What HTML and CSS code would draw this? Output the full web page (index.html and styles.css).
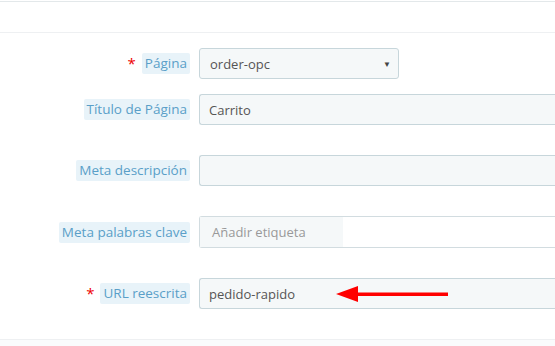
FILE: index.html
```html
<!DOCTYPE html>
<html lang="es">
<head>
    <meta charset="UTF-8">
    <title>Meta</title>
    <link rel="stylesheet" href="styles.css">
</head>
<body>
    <div class="panel-top"></div>
    <div class="panel-head"></div>

    <form class="form">
        <div class="fila">
            <label class="etiqueta"><span class="req">*</span><span class="caja">Página</span></label>
            <div class="campo">
                <div class="select">order-opc<span class="flecha">▼</span></div>
            </div>
        </div>

        <div class="fila">
            <label class="etiqueta"><span class="caja">Título de Página</span></label>
            <div class="campo">
                <input class="input" type="text" value="Carrito">
            </div>
        </div>

        <div class="fila espacio">
            <label class="etiqueta"><span class="caja">Meta descripción</span></label>
            <div class="campo">
                <input class="input" type="text" value="">
            </div>
        </div>

        <div class="fila espacio">
            <label class="etiqueta"><span class="caja">Meta palabras clave</span></label>
            <div class="campo">
                <div class="tags">
                    <span class="tag-hint">Añadir etiqueta</span>
                    <span class="tag-blank"></span>
                </div>
            </div>
        </div>

        <div class="fila espacio">
            <label class="etiqueta"><span class="req">*</span><span class="caja">URL reescrita</span></label>
            <div class="campo">
                <input class="input" type="text" value="pedido-rapido">
                <!-- flecha roja de la captura -->
                <svg class="senal" width="114" height="18" viewBox="0 0 114 18">
                    <polygon points="0,9 22,1 22,17" fill="#f00"/>
                    <rect x="20" y="7.5" width="92" height="3.5" fill="#f00"/>
                </svg>
            </div>
        </div>
    </form>

    <div class="panel-foot"></div>
</body>
</html>
```

FILE: styles.css
```css
body {
    margin: 0;
    background-color: #fff;
    font-family: "Open Sans", "Noto Sans", sans-serif;
    font-size: 13px;
    color: #555;
}

.panel-top {
    height: 1px;
    border-bottom: 1px solid #e3e8ea;
}
.panel-head {
    height: 30px;
    border-bottom: 1px solid #eef0f2;
}

.form {
    padding-top: 15px;
}
.fila {
    display: flex;
    align-items: center;
    margin-bottom: 15px;
}
.fila.espacio {
    margin-top: 30px;
}
.etiqueta {
    width: 199px;
    flex: none;
    display: flex;
    justify-content: flex-end;
    align-items: center;
    padding-right: 9px;
    box-sizing: border-box;
}
.req {
    color: #e00;
    font-size: 15px;
    margin-right: 6px;
    position: relative;
    top: -1px;
}
.caja {
    background-color: #e8f3f9;
    color: #5a9fc8;
    padding: 1px 3px;
    border-radius: 2px;
    line-height: 19px;
    font-size: 13.5px;
}
.campo {
    flex: 1;
    position: relative;
}
.select {
    width: 200px;
    height: 31px;
    box-sizing: border-box;
    background-color: #f5f8f9;
    border: 1px solid #c7d6db;
    border-radius: 3px;
    padding: 0 7px 0 10px;
    display: flex;
    align-items: center;
    justify-content: space-between;
}
.flecha {
    font-size: 8px;
    color: #444;
}
.input {
    display: block;
    width: 100%;
    height: 31px;
    box-sizing: border-box;
    background-color: #f5f8f9;
    border: 1px solid #c7d6db;
    border-right: none;
    border-radius: 3px 0 0 3px;
    padding: 0 9px;
    font-family: inherit;
    font-size: 13px;
    color: #555;
}
.tags {
    display: flex;
    height: 32px;
    box-sizing: border-box;
    border: 1px solid #d2dce0;
    border-right: none;
    border-radius: 3px 0 0 3px;
}
.tag-hint {
    width: 143px;
    flex: none;
    background-color: #f5f8f9;
    color: #999;
    padding-left: 12px;
    display: flex;
    align-items: center;
    box-sizing: border-box;
}
.tag-blank {
    flex: 1;
    background-color: #fff;
}
.senal {
    position: absolute;
    left: 137px;
    top: 7px;
}

.panel-foot {
    margin-top: 30px;
    border-top: 1px solid #eef0f2;
    height: 10px;
    background-color: #fafbfc;
}
```
